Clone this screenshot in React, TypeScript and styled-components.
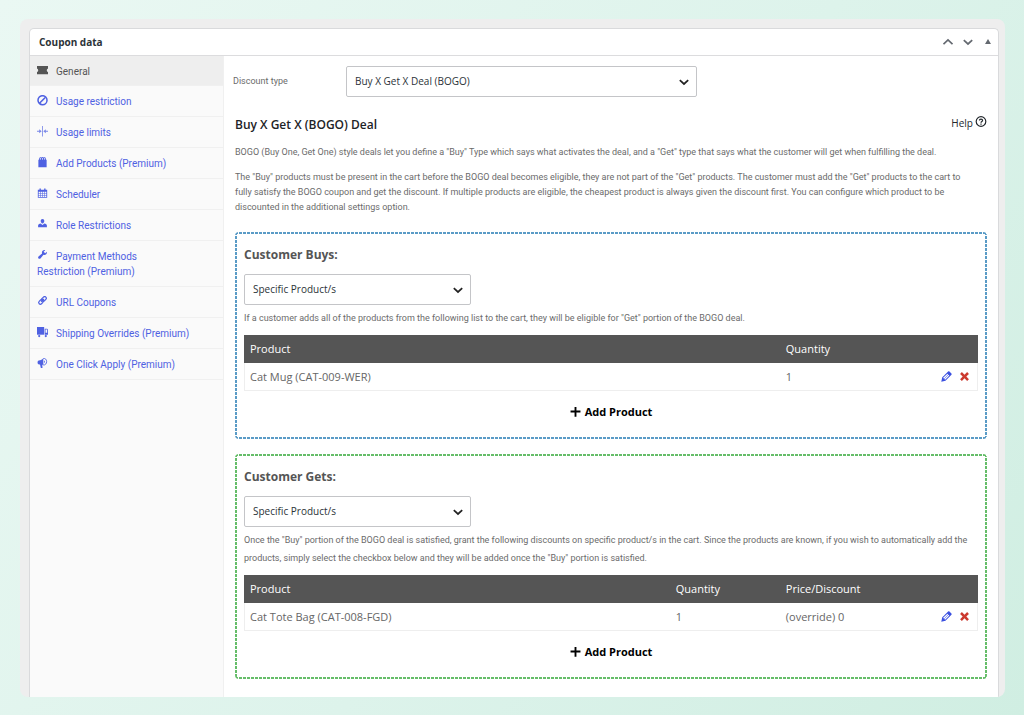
import React from "react";
import styled, { createGlobalStyle } from "styled-components";

const smallFont = `Roboto, "Open Sans", sans-serif`;

const GlobalStyle = createGlobalStyle`
  *, *::before, *::after { box-sizing: border-box; }
  body {
    margin: 0;
    font-family: "Open Sans", "Noto Sans", sans-serif;
    font-size: 10px;
    line-height: 15px;
    color: #646970;
  }
  h2, h3, h4, p, ul { margin: 0; padding: 0; }
  button, select { font: inherit; color: inherit; }
`;

const Page = styled.div`
  display: flex;
  min-height: 100vh;
  padding: 19px 19px 19px 20px;
  background: linear-gradient(125deg, #eaf8f3 0%, #ddf3eb 55%, #d0eee2 100%);
`;

const Frame = styled.div`
  flex: 1;
  display: flex;
  min-width: 0;
  padding: 9px 6px 0 9px;
  border-radius: 8px;
  background: #eeeeee;
  overflow: hidden;
`;

const Postbox = styled.section`
  flex: 1;
  display: flex;
  flex-direction: column;
  min-width: 0;
  border: 1px solid #d9dadc;
  border-bottom: 0;
  border-radius: 5px 5px 0 0;
  background: #fff;
  overflow: hidden;
`;

const BoxHeader = styled.header`
  display: flex;
  align-items: center;
  justify-content: space-between;
  height: 27px;
  padding: 0 0 0 9px;
  border-bottom: 1px solid #dcdcde;
`;

const BoxTitle = styled.h2`
  font-size: 10px;
  font-weight: 700;
  line-height: 16px;
  color: #2c3338;
`;

const HeaderActions = styled.div`
  display: flex;
  align-items: center;
`;

const IconButton = styled.button<{ $color?: string; $width?: number }>`
  display: inline-flex;
  align-items: center;
  justify-content: center;
  width: ${(p) => p.$width ?? 20}px;
  height: 16px;
  padding: 0;
  border: 0;
  background: none;
  color: ${(p) => p.$color ?? "#646970"};
  cursor: pointer;
`;

const BoxBody = styled.div`
  flex: 1;
  display: flex;
`;

const Sidebar = styled.nav`
  flex: 0 0 194px;
  border-right: 1px solid #f0f0f0;
  background: #fafafa;
`;

const TabList = styled.ul`
  list-style: none;
`;

const TabItem = styled.li`
  border-bottom: 1px solid #f0f0f0;
`;

const TabLink = styled.a<{ $active?: boolean }>`
  display: block;
  padding: 8px 32px ${(p) => (p.$active ? 6 : 7)}px 7px;
  font-family: ${smallFont};
  white-space: pre-line;
  color: ${(p) => (p.$active ? "#555" : "#4f61e2")};
  background: ${(p) => (p.$active ? "#eeeeee" : "transparent")};
  text-decoration: none;

  svg {
    width: 11px;
    height: 11px;
    margin-right: 8px;
    vertical-align: -1px;
  }
`;

const Panel = styled.main`
  flex: 1;
  min-width: 0;
  padding: 10px 11px 18px 9px;
`;

const Field = styled.div`
  display: flex;
  align-items: center;
  margin-bottom: 19px;
`;

const FieldLabel = styled.label`
  flex: 0 0 113px;
  font-family: ${smallFont};
  font-size: 9px;
  color: #6b6b6b;
`;

const SelectWrap = styled.div<{ $width: number }>`
  display: grid;
  align-items: center;
  width: ${(p) => p.$width}px;

  > * { grid-area: 1 / 1; }

  svg {
    justify-self: end;
    margin-right: 8px;
    color: #222;
    pointer-events: none;
  }
`;

const SelectBox = styled.select`
  width: 100%;
  height: 31px;
  padding: 0 24px 0 8px;
  border: 1px solid #c4c5c8;
  border-radius: 2px;
  background: #fff;
  color: #2c3338;
  appearance: none;
`;

const Deal = styled.div`
  padding-left: 2px;
`;

const DealHeader = styled.div`
  display: flex;
  align-items: flex-start;
  justify-content: space-between;
  height: 18px;
  margin-bottom: 11px;
`;

const DealTitle = styled.h3`
  font-size: 12px;
  font-weight: 600;
  line-height: 18px;
  color: #1d2327;
`;

const HelpButton = styled.button`
  display: inline-flex;
  gap: 2px;
  padding: 0;
  border: 0;
  background: none;
  color: #23282d;
  cursor: pointer;
`;

const Intro = styled.p`
  margin-bottom: 10px;
  padding-right: 14px;
  font-family: ${smallFont};
  font-size: 9px;
  line-height: 15px;
  color: #6b6b6b;
`;

const Group = styled.section<{ $tone: string }>`
  --dash: ${(p) => p.$tone} 0 3px, #fff 3px 4px;
  margin-top: 15px;
  padding: 14px 9px 19px;
  border-radius: 4px;
  background:
    repeating-linear-gradient(to right, var(--dash)) top / 100% 2px no-repeat,
    repeating-linear-gradient(to right, var(--dash)) bottom / 100% 2px no-repeat,
    repeating-linear-gradient(to bottom, var(--dash)) left / 2px 100% no-repeat,
    repeating-linear-gradient(to bottom, var(--dash)) right / 2px 100% no-repeat;

  ${Intro} + & { margin-top: 17px; }
`;

const GroupTitle = styled.h4`
  margin-bottom: 10px;
  font-size: 12px;
  font-weight: 700;
  line-height: 18px;
  color: #555;
`;

const Hint = styled.p`
  margin: 4px 0 8px;
  font-family: ${smallFont};
  font-size: 9px;
  line-height: 18px;
  color: #6b6b6b;
`;

const Table = styled.table`
  width: 100%;
  border-collapse: separate;
  border-spacing: 0;
  table-layout: fixed;
`;

const HeadCell = styled.th<{ $width?: string }>`
  width: ${(p) => p.$width ?? "auto"};
  height: 28px;
  padding: 0 6px 1px;
  background: #555;
  color: #fff;
  font-size: 11px;
  font-weight: 400;
  text-align: left;
`;

const Cell = styled.td`
  height: 28px;
  padding: 0 6px;
  border-bottom: 1px solid #eeeeee;
  color: #666;
  font-size: 11px;

  &:first-child { box-shadow: inset 1px 0 #eeeeee; }
  &:last-child { box-shadow: inset -1px 0 #eeeeee; }
`;

const RowActions = styled.div`
  display: flex;
  justify-content: flex-end;
  gap: 2px;
`;

const AddButton = styled.button`
  display: flex;
  align-items: center;
  gap: 4px;
  margin: 13px auto 0;
  padding: 0;
  border: 0;
  background: none;
  color: #000;
  font-size: 11px;
  font-weight: 700;
  line-height: 16px;
  cursor: pointer;
`;

type GlyphProps = { size?: number; children: React.ReactNode };

const Glyph = ({ size = 12, children }: GlyphProps) => (
  <svg width={size} height={size} viewBox="0 0 20 20" fill="currentColor" aria-hidden="true">
    {children}
  </svg>
);

const Chevron = ({ up = false, size = 10 }: { up?: boolean; size?: number }) => (
  <svg width={size} height={size} viewBox="0 0 10 10" fill="none" stroke="currentColor" strokeWidth="1.7" aria-hidden="true">
    <path d={up ? "M0.5 7.2 5 3 9.5 7.2" : "M0.8 3.200 5 7 9.200 3.200"} />
  </svg>
);

const PencilIcon = () => (
  <Glyph size={15}>
    <path d="M13.89 3.39l2.71 2.72c.46.46.42 1.24.03 1.64l-8.01 8.02-5.56 1.16 1.16-5.58s7.6-7.63 7.99-8.03c.39-.39 1.22-.39 1.68.07zm-2.73 2.79l-5.59 5.61 1.11 1.11 5.54-5.65zm-2.97 8.23l5.58-5.6-1.07-1.08-5.59 5.6z" />
  </Glyph>
);

const CrossIcon = () => (
  <Glyph size={15}>
    <path d="M12.4 10l3.500 3.500-2.400 2.400L10 12.400l-3.500 3.500-2.400-2.400L7.600 10 4.100 6.500l2.400-2.400L10 7.600l3.500-3.500 2.400 2.400z" />
  </Glyph>
);

const PlusIcon = () => (
  <Glyph size={11}>
    <path d="M19 6.500v3.400h-7.300V17.500H8.300V9.900H1V6.500h7.300V0h3.400v6.500z" />
  </Glyph>
);

const HelpIcon = () => (
  <svg width="12" height="12" viewBox="0 0 12 12" fill="none" stroke="currentColor" strokeWidth="1.2" aria-hidden="true">
    <circle cx="6" cy="5.500" r="4.800" />
    <path d="M4.400 4.400C4.400 2.700 7.600 2.700 7.600 4.400 7.600 5.500 6 5.500 6 6.700" />
    <path d="M6 7.500v1.200" />
  </svg>
);

const tabs: { label: string; icon: React.ReactNode }[] = [
  {
    label: "General",
    icon: <path d="M0 2h20v4.200c-3 .8-3 5.800 0 6.600V17H0v-4.200c3-.8 3-5.800 0-6.600z" />,
  },
  {
    label: "Usage restriction",
    icon: (
      <g fill="none" stroke="currentColor" strokeWidth="2.800">
        <circle cx="10" cy="9.500" r="8.200" />
        <path d="M4.500 15l11-11" />
      </g>
    ),
  },
  {
    label: "Usage limits",
    icon: (
      <g opacity=".75">
        <path d="M9.300 0h1.500v19H9.300z" />
        <path d="M0 8.700h4V6l4.500 3.500L4 13v-2.700H0zM20 8.700h-4V6l-4.500 3.500L16 13v-2.700h4z" />
      </g>
    ),
  },
  {
    label: "Add Products (Premium)",
    icon: (
      <path
        fillRule="evenodd"
        d="M2.500 18.500V5.500L4 4V2.500a2.600 2.600 0 0 1 4-1.700 3.200 3.200 0 0 1 4 0 2.600 2.600 0 0 1 4 1.700V4l1.500 1.500v13zM5.600 4.500h1.700V2.700a.85.85 0 0 0-1.700 0zm3.500 0h1.800V2.700a.9.9 0 0 0-1.800 0zm3.600 0h1.700V2.700a.85.85 0 0 0-1.700 0z"
      />
    ),
  },
  {
    label: "Scheduler",
    icon: (
      <path
        fillRule="evenodd"
        d="M1.500 3h3V1H7v2h6V1h2.500v2h3v14.500h-17zm1.500 4v2.500h2.800V7zm3.800 0v2.500h2.700V7zm3.700 0v2.500h2.700V7zm3.700 0v2.500H17V7zM3 10.500v2.500h2.800v-2.500zm3.800 0v2.500h2.700v-2.500zm3.700 0v2.500h2.700v-2.500zm3.700 0v2.500H17v-2.500zM3 14v2.300h2.800V14zm3.800 0v2.300h2.700V14zm3.700 0v2.300h2.700V14zm3.700 0v2.300H17V14z"
      />
    ),
  },
  {
    label: "Role Restrictions",
    icon: (
      <path d="M10 0c2 0 3.300 1.600 3.300 3.700S12 8 10 8 6.700 5.800 6.700 3.700 8 0 10 0zM2 15v-3c0-2 2-3.300 4.500-3.600L10 11l3.500-2.600c2.500.3 4.500 1.600 4.500 3.600v3z" />
    ),
  },
  {
    label: "Payment Methods\nRestriction (Premium)",
    icon: (
      <path d="M16.680 7.770c-1.340 1.340-3.300 1.670-4.950.99l-5.410 6.520c-.99.99-2.590.99-3.580 0s-.99-2.590 0-3.570l6.520-5.420c-.68-1.650-.35-3.610.99-4.950 1.280-1.280 3.120-1.620 4.720-1.060l-2.890 2.890 2.820 2.820 2.860-2.870c.53 1.580.18 3.390-1.080 4.650z" />
    ),
  },
  {
    label: "URL Coupons",
    icon: (
      <g fill="none" stroke="currentColor" strokeWidth="2.200" transform="rotate(-45 10 8)">
        <rect x="1.500" y="5" width="9.500" height="6" rx="3" />
        <rect x="9" y="5" width="9.500" height="6" rx="3" />
        <path d="M6.500 8h7" />
      </g>
    ),
  },
  {
    label: "Shipping Overrides (Premium)",
    icon: (
      <g>
        <path d="M0 0h13v14H0z" />
        <path d="M14 3h4.500l1.500 1.500V14h-6zm1.500 1.500v6h3v-6z" fillRule="evenodd" />
        <circle cx="4" cy="16.500" r="2" />
        <circle cx="16" cy="16.500" r="2" />
      </g>
    ),
  },
  {
    label: "One Click Apply (Premium)",
    icon: (
      <g>
        <path d="M11.500 0v13.500L9.500 12l.5 6H7L5.500 12C2.500 12 1 10.500 1 8s1.500-4 4.500-4C8 4 10 2.500 11.500 0z" />
        <path d="M11.500 1c3.500-1 6 2 6 5.500s-2.500 7-6 6" fill="none" stroke="currentColor" strokeWidth="1.600" />
        <path d="M13 4.500c2 .5 2 4 0 4.500z" />
      </g>
    ),
  },
];

type DropdownProps = { id: string; label?: string; width: number; value: string };

const Dropdown = ({ id, label, width, value }: DropdownProps) => (
  <SelectWrap $width={width}>
    <SelectBox id={id} aria-label={label} defaultValue={value}>
      <option value={value}>{value}</option>
    </SelectBox>
    <Chevron />
  </SelectWrap>
);

type Column = { label: string; width: string };

type DealGroupProps = {
  id: string;
  title: string;
  tone: string;
  hint: string;
  columns: Column[];
  row: string[];
};

const DealGroup = ({ id, title, tone, hint, columns, row }: DealGroupProps) => (
  <Group $tone={tone}>
    <GroupTitle>{title}</GroupTitle>
    <Dropdown id={id} label={title} width={227} value="Specific Product/s" />
    <Hint>{hint}</Hint>
    <Table>
      <thead>
        <tr>
          {columns.map((c) => (
            <HeadCell key={c.label} $width={c.width} scope="col">
              {c.label}
            </HeadCell>
          ))}
          <HeadCell aria-label="Actions" />
        </tr>
      </thead>
      <tbody>
        <tr>
          {row.map((value) => (
            <Cell key={value}>{value}</Cell>
          ))}
          <Cell>
            <RowActions>
              <IconButton type="button" aria-label="Edit" $width={16} $color="#3b50e0">
                <PencilIcon />
              </IconButton>
              <IconButton type="button" aria-label="Remove" $width={16} $color="#cc3a2f">
                <CrossIcon />
              </IconButton>
            </RowActions>
          </Cell>
        </tr>
      </tbody>
    </Table>
    <AddButton type="button">
      <PlusIcon />
      Add Product
    </AddButton>
  </Group>
);

export default function App() {
  return (
    <>
      <GlobalStyle />
      <Page>
        <Frame>
          <Postbox>
            <BoxHeader>
              <BoxTitle>Coupon data</BoxTitle>
              <HeaderActions>
                <IconButton type="button" aria-label="Move up">
                  <Chevron up />
                </IconButton>
                <IconButton type="button" aria-label="Move down">
                  <Chevron />
                </IconButton>
                <IconButton type="button" aria-label="Toggle panel">
                  <svg width="6" height="6" viewBox="0 0 6 6" fill="currentColor" aria-hidden="true">
                    <path d="M3 0 6 5H0z" />
                  </svg>
                </IconButton>
              </HeaderActions>
            </BoxHeader>
            <BoxBody>
              <Sidebar>
                <TabList>
                  {tabs.map((tab, i) => (
                    <TabItem key={tab.label}>
                      <TabLink href="#" $active={i === 0}>
                        <Glyph>{tab.icon}</Glyph>
                        {tab.label}
                      </TabLink>
                    </TabItem>
                  ))}
                </TabList>
              </Sidebar>
              <Panel>
                <Field>
                  <FieldLabel htmlFor="discount-type">Discount type</FieldLabel>
                  <Dropdown id="discount-type" width={351} value="Buy X Get X Deal (BOGO)" />
                </Field>
                <Deal>
                  <DealHeader>
                    <DealTitle>Buy X Get X (BOGO) Deal</DealTitle>
                    <HelpButton type="button">
                      Help
                      <HelpIcon />
                    </HelpButton>
                  </DealHeader>
                  <Intro>
                    BOGO (Buy One, Get One) style deals let you define a "Buy" Type which says what activates the deal,
                    and a "Get" type that says what the customer will get when fulfilling the deal.
                  </Intro>
                  <Intro>
                    The "Buy" products must be present in the cart before the BOGO deal becomes eligible, they are not
                    part of the "Get" products. The customer must add the "Get" products to the cart to fully satisfy the
                    BOGO coupon and get the discount. If multiple products are eligible, the cheapest product is always
                    given the discount first. You can configure which product to be discounted in the additional
                    settings option.
                  </Intro>
                  <DealGroup
                    id="buy-type"
                    title="Customer Buys:"
                    tone="#5a9bc6"
                    hint={
                      'If a customer adds all of the products from the following list to the cart, they will be eligible for "Get" portion of the BOGO deal.'
                    }
                    columns={[
                      { label: "Product", width: "73%" },
                      { label: "Quantity", width: "13%" },
                    ]}
                    row={["Cat Mug (CAT-009-WER)", "1"]}
                  />
                  <DealGroup
                    id="get-type"
                    title="Customer Gets:"
                    tone="#65bd69"
                    hint={
                      'Once the "Buy" portion of the BOGO deal is satisfied, grant the following discounts on specific product/s in the cart. Since the products are known, if you wish to automatically add the products, simply select the checkbox below and they will be added once the "Buy" portion is satisfied.'
                    }
                    columns={[
                      { label: "Product", width: "58%" },
                      { label: "Quantity", width: "15%" },
                      { label: "Price/Discount", width: "13%" },
                    ]}
                    row={["Cat Tote Bag (CAT-008-FGD)", "1", "(override) 0"]}
                  />
                </Deal>
              </Panel>
            </BoxBody>
          </Postbox>
        </Frame>
      </Page>
    </>
  );
}
